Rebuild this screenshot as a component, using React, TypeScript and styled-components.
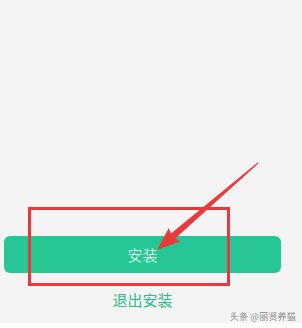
import React from 'react';
import styled, { createGlobalStyle } from 'styled-components';

const GlobalStyle = createGlobalStyle`
  html, body {
    margin: 0;
    padding: 0;
    background: #ffffff;
  }
  body {
    font-family: "Noto Sans CJK SC", "Noto Sans", sans-serif;
  }
`;

const Page = styled.div`
  width: 302px;
  height: 328px;
  position: relative;
  overflow: hidden;
  background: #ffffff;
`;

const Screen = styled.div`
  height: 323px;
  background: #f4f4f4;
  display: flex;
  flex-direction: column;
  justify-content: flex-end;
  align-items: stretch;
  padding: 0 21px 12px 4px;
  box-sizing: border-box;
`;

const InstallButton = styled.button`
  height: 37px;
  border: none;
  border-radius: 6px;
  background: #26c795;
  color: #ffffff;
  font-family: inherit;
  font-size: 15px;
  font-weight: 300;
  display: flex;
  align-items: center;
  justify-content: center;
  padding: 0;
`;

const ExitLink = styled.div`
  margin-top: 16px;
  height: 22px;
  line-height: 22px;
  text-align: center;
  color: #2bbd8c;
  font-size: 15px;
  font-weight: 400;
`;

const Highlight = styled.div`
  position: absolute;
  left: 28px;
  top: 207px;
  width: 202px;
  height: 79px;
  border: 3px solid #e8383b;
  box-sizing: border-box;
  pointer-events: none;
`;

const Arrow = styled.svg`
  position: absolute;
  left: 0;
  top: 0;
  pointer-events: none;
`;

const Watermark = styled.div`
  position: absolute;
  right: 6px;
  top: 311px;
  font-size: 9px;
  line-height: 12px;
  color: #8a8a8a;
  letter-spacing: 0.2px;
`;

export default function App() {
  return (
    <>
      <GlobalStyle />
      <Page>
        <Screen>
          <InstallButton>安装</InstallButton>
          <ExitLink>退出安装</ExitLink>
        </Screen>
        <Highlight />
        <Arrow width="302" height="328" viewBox="0 0 302 328">
          {/* arrow drawn along +x, then turned to point from the tail to the button */}
          <g transform="translate(258 163) rotate(139.3)">
            <polygon
              points="0,-0.6 112,-3.2 110,-9 133,0 110,9 112,3.2 0,0.6"
              fill="#ea3a3c"
            />
          </g>
        </Arrow>
        <Watermark>头条 @丽贤养猫</Watermark>
      </Page>
    </>
  );
}
